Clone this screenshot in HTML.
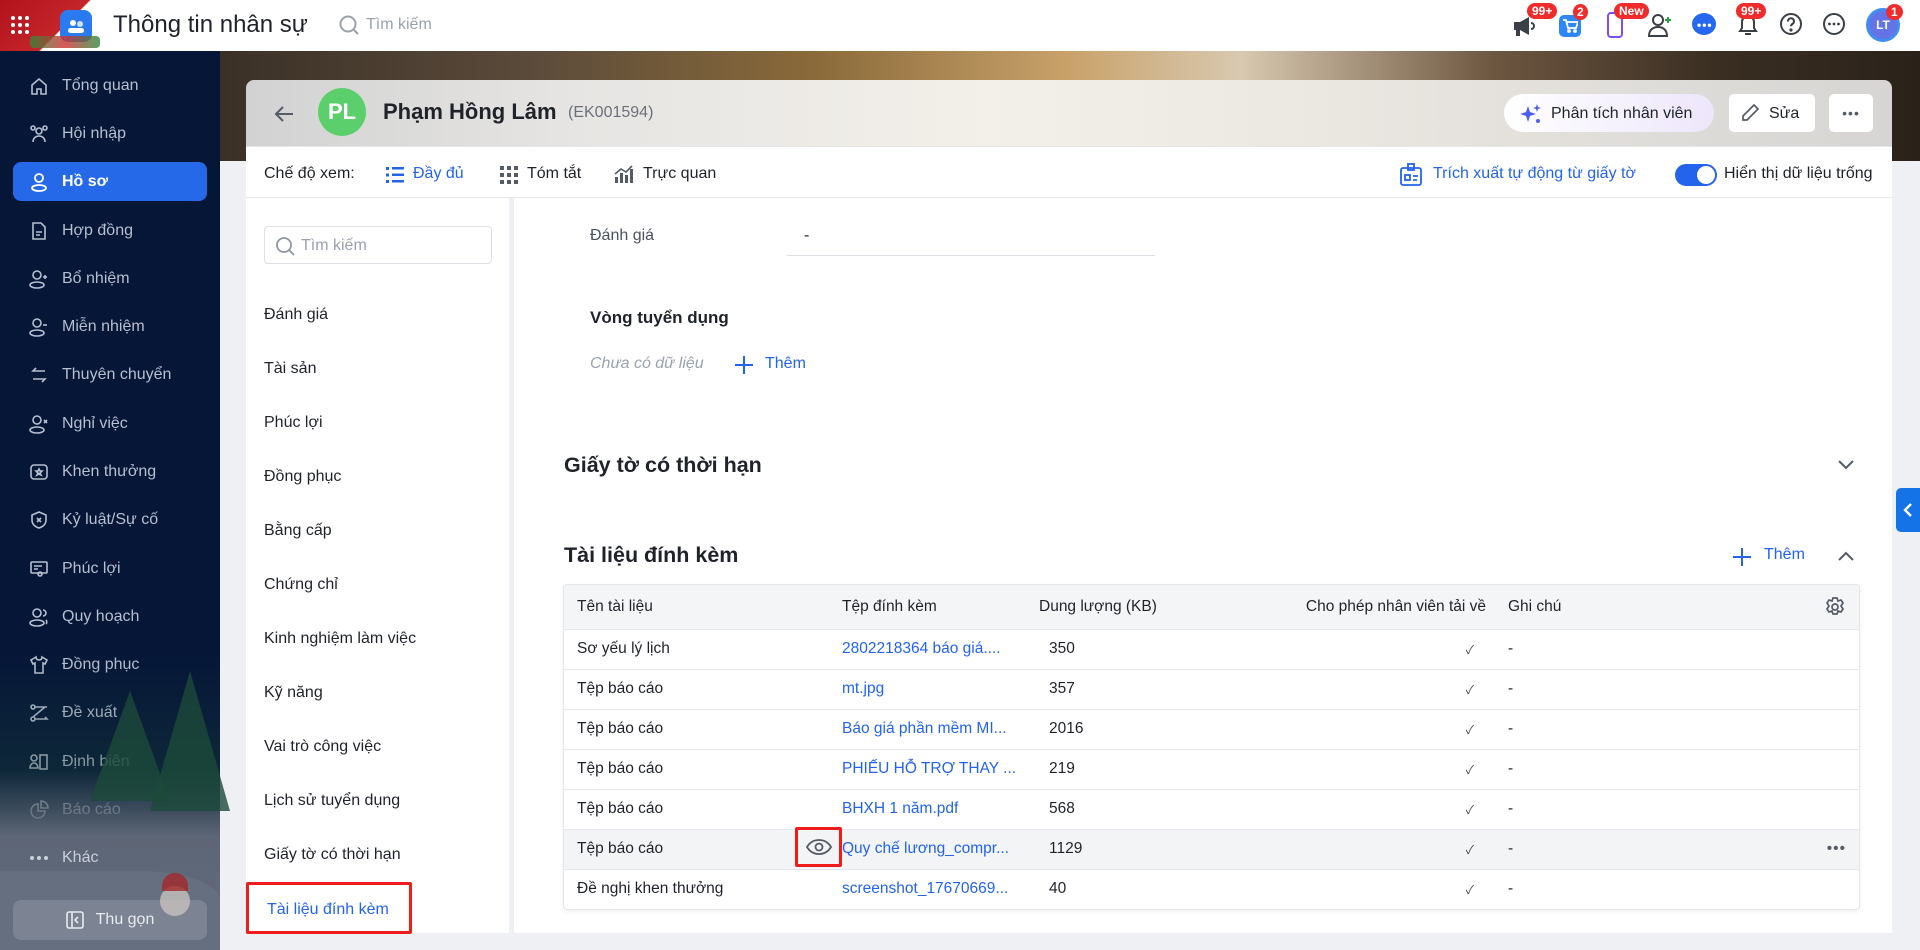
<!DOCTYPE html>
<html><head><meta charset="utf-8">
<style>
*{box-sizing:border-box;margin:0;padding:0}
body{width:1920px;height:950px;overflow:hidden;background:#eef0f3;font-family:"Liberation Sans","Noto Sans CJK SC",sans-serif;color:#1f2329;position:relative;font-size:15px}
.abs{position:absolute}
.top{left:0;top:0;width:1920px;height:51px;background:#fff}
.side{left:0;top:51px;width:220px;height:899px;background:#051637}
.si{position:absolute;left:13px;width:194px;height:39px;color:#b7bfd0;font-size:16px;display:flex;align-items:center;padding-left:49px;border-radius:8px}
.si svg{position:absolute;left:16px;top:10px}
.si.act{background:#2669e8;color:#fff;font-weight:bold}
.banner{left:220px;top:51px;width:1700px;height:110px;background:linear-gradient(90deg,#3a3026 0%,#5a4a3a 18%,#8a6a3a 35%,#c9a26a 50%,#d8c9b0 60%,#6d5640 75%,#3a2e22 88%,#2a221a 100%)}
.card{left:246px;top:80px;width:1646px;height:66px;border-radius:8px 8px 0 0;background:linear-gradient(90deg,#d2d2d2 0%,#e6e5e3 20%,#f3efe9 45%,#ebe7e1 65%,#d6d5d3 100%)}
.vbar{left:246px;top:146px;width:1646px;height:52px;background:#fff;border-top:1px solid #e5e7eb;border-bottom:1px solid #e5e7eb}
.lp{left:246px;top:198px;width:263px;height:735px;background:#fff}
.li{position:absolute;left:18px;font-size:16px;color:#1f2329;margin-top:2px}
.ct{left:514px;top:198px;width:1378px;height:735px;background:#fff}
.blue{color:#2463eb}
table{border-collapse:collapse;width:1296px;font-size:15.5px}
td,th{height:40px;text-align:left;font-weight:normal;border-bottom:1px solid #e5e7eb;white-space:nowrap}
th{height:44px;background:#f4f5f7;color:#1f2329}
.ck{text-align:right;padding-right:34px;font-size:12px;color:#444}
.badge{position:absolute;background:#ef2b2b;color:#fff;font-size:12px;font-weight:bold;border-radius:9px;padding:1px 5px;line-height:14px}
</style></head><body>

<div class="abs top">
  <div class="abs" style="left:0;top:0;width:112px;height:51px;background:linear-gradient(135deg,#b3141c 0%,#c3252b 55%,#fff 56%);border-bottom-right-radius:40px"></div>
  <svg class="abs" style="left:9px;top:14px" width="22" height="22"><g fill="#fff"><circle cx="4" cy="4" r="2"/><circle cx="11" cy="4" r="2"/><circle cx="18" cy="4" r="2"/><circle cx="4" cy="11" r="2"/><circle cx="11" cy="11" r="2"/><circle cx="18" cy="11" r="2"/><circle cx="4" cy="18" r="2"/><circle cx="11" cy="18" r="2"/><circle cx="18" cy="18" r="2"/></g></svg>
  <div class="abs" style="left:60px;top:10px;width:32px;height:32px;border-radius:8px;background:#2b7bf0"></div>
  <svg class="abs" style="left:66px;top:16px" width="20" height="20"><circle cx="7" cy="7" r="3" fill="#fff"/><circle cx="14" cy="8" r="3" fill="#cfe2ff"/><rect x="2" y="12" width="16" height="5" rx="2.5" fill="#fff"/></svg>
  <div class="abs" style="left:30px;top:36px;width:70px;height:12px;background:linear-gradient(90deg,#2f8a3c,#d03030,#2f8a3c);border-radius:4px;opacity:.8"></div>
  <div class="abs" style="left:113px;top:11px;font-size:24px;color:#1f2329">Thông tin nhân sự</div>
  <svg class="abs" style="left:338px;top:14px" width="22" height="22" fill="none" stroke="#9aa1ad" stroke-width="2"><circle cx="10" cy="10" r="7.5"/><path d="M15.5 15.5l4.5 4.5"/></svg>
  <div class="abs" style="left:366px;top:16px;font-size:16px;color:#9aa1ad">Tìm kiếm</div>

  <svg class="abs" style="left:1511px;top:14px" width="26" height="24" fill="#3b3f46"><path d="M3 8h6l9-5v18l-9-5H3z"/><rect x="5" y="16" width="4" height="6"/><path d="M20 9a3 3 0 010 6" stroke="#3b3f46" fill="none" stroke-width="2"/></svg>
  <div class="badge" style="left:1527px;top:3px">99+</div>
  <div class="abs" style="left:1559px;top:15px;width:22px;height:22px;border-radius:5px;background:#2f86f6"></div>
  <svg class="abs" style="left:1562px;top:18px" width="16" height="16" fill="none" stroke="#fff" stroke-width="1.8"><path d="M1 2h3l2 8h8l2-6H5"/><circle cx="7" cy="13" r="1"/><circle cx="13" cy="13" r="1"/></svg>
  <div class="badge" style="left:1573px;top:4px;border-radius:50%;padding:1px 4px">2</div>
  <div class="abs" style="left:1607px;top:12px;width:16px;height:26px;border-radius:4px;border:2.5px solid #7c4df0"></div>
  <div class="badge" style="left:1614px;top:3px">New</div>
  <svg class="abs" style="left:1647px;top:12px" width="28" height="26" fill="none" stroke="#3b3f46" stroke-width="2"><circle cx="11" cy="8" r="5"/><path d="M2 24c0-6 4-9 9-9s9 3 9 9z"/><path d="M21 5v6M18 8h6" stroke="#2ea043"/></svg>
  <div class="abs" style="left:1692px;top:13px;width:24px;height:22px;border-radius:50%;background:#2667f0"></div>
  <div class="abs" style="left:1697px;top:18px;color:#fff;font-size:12px;letter-spacing:1px;font-weight:bold">•••</div>
  <svg class="abs" style="left:1736px;top:12px" width="24" height="26" fill="none" stroke="#3b3f46" stroke-width="2"><path d="M4 19h16l-2-3v-6a6 6 0 00-12 0v6z"/><path d="M9 22h6"/></svg>
  <div class="badge" style="left:1736px;top:3px">99+</div>
  <svg class="abs" style="left:1779px;top:12px" width="24" height="24" fill="none" stroke="#3b3f46" stroke-width="2"><circle cx="12" cy="12" r="10"/><path d="M9 9.5a3 3 0 115 2c-1 .7-2 1.3-2 2.8"/><circle cx="12" cy="18" r=".6" fill="#3b3f46"/></svg>
  <svg class="abs" style="left:1822px;top:12px" width="24" height="24" fill="none" stroke="#3b3f46" stroke-width="2"><circle cx="12" cy="12" r="10"/><g fill="#3b3f46" stroke="none"><circle cx="7.5" cy="12" r="1.4"/><circle cx="12" cy="12" r="1.4"/><circle cx="16.5" cy="12" r="1.4"/></g></svg>
  <div class="abs" style="left:1866px;top:8px;width:34px;height:34px;border-radius:50%;background:#6473e6;border:3px solid #3d8ff0;color:#fff;font-size:12px;font-weight:bold;text-align:center;line-height:28px">LT</div>
  <div class="badge" style="left:1886px;top:4px;border-radius:50%;padding:1px 5px">1</div>
</div>

<div class="abs side">
  <div class="si" style="top:15px"><svg width="20" height="20" fill="none" stroke="#b7bfd0" stroke-width="1.6"><path d="M3 9l7-6 7 6v9h-5v-5H8v5H3z"/></svg>Tổng quan</div>
  <div class="si" style="top:63px"><svg width="20" height="20" fill="none" stroke="#b7bfd0" stroke-width="1.6"><circle cx="10" cy="7" r="3"/><circle cx="4" cy="4" r="2"/><circle cx="16" cy="4" r="2"/><path d="M4 18c0-4 3-6 6-6s6 2 6 6"/></svg>Hội nhập</div>
  <div class="si act" style="top:111px"><svg width="20" height="20" fill="none" stroke="#fff" stroke-width="1.8"><circle cx="10" cy="6" r="4"/><ellipse cx="10" cy="16" rx="7" ry="3"/></svg>Hồ sơ</div>
  <div class="si" style="top:160px"><svg width="20" height="20" fill="none" stroke="#b7bfd0" stroke-width="1.6"><path d="M4 2h8l4 4v12H4z"/><path d="M7 11h6M7 14h4"/></svg>Hợp đồng</div>
  <div class="si" style="top:208px"><svg width="20" height="20" fill="none" stroke="#b7bfd0" stroke-width="1.6"><circle cx="8" cy="6" r="4"/><ellipse cx="8" cy="16" rx="7" ry="3"/><path d="M16 6v4M14 8h4"/></svg>Bổ nhiệm</div>
  <div class="si" style="top:256px"><svg width="20" height="20" fill="none" stroke="#b7bfd0" stroke-width="1.6"><circle cx="8" cy="6" r="4"/><ellipse cx="8" cy="16" rx="7" ry="3"/><path d="M14 8h4"/></svg>Miễn nhiệm</div>
  <div class="si" style="top:304px"><svg width="20" height="20" fill="none" stroke="#b7bfd0" stroke-width="1.6"><path d="M16 6H4l3-3M4 14h12l-3 3"/></svg>Thuyên chuyển</div>
  <div class="si" style="top:353px"><svg width="20" height="20" fill="none" stroke="#b7bfd0" stroke-width="1.6"><circle cx="8" cy="6" r="4"/><ellipse cx="8" cy="16" rx="7" ry="3"/><path d="M15 6l3 3M18 6l-3 3"/></svg>Nghỉ việc</div>
  <div class="si" style="top:401px"><svg width="20" height="20" fill="none" stroke="#b7bfd0" stroke-width="1.6"><rect x="2" y="3" width="16" height="14" rx="3"/><path d="M10 7l1 2h2l-2 2 1 2-2-1-2 1 1-2-2-2h2z"/></svg>Khen thưởng</div>
  <div class="si" style="top:449px"><svg width="20" height="20" fill="none" stroke="#b7bfd0" stroke-width="1.6"><path d="M10 2l7 3v5c0 4-3 7-7 8-4-1-7-4-7-8V5z"/><path d="M8 8l4 4M12 8l-4 4"/></svg>Kỷ luật/Sự cố</div>
  <div class="si" style="top:498px"><svg width="20" height="20" fill="none" stroke="#b7bfd0" stroke-width="1.6"><rect x="2" y="3" width="16" height="11" rx="1"/><circle cx="11" cy="15" r="2"/><path d="M5 7h8M5 10h4"/></svg>Phúc lợi</div>
  <div class="si" style="top:546px"><svg width="20" height="20" fill="none" stroke="#b7bfd0" stroke-width="1.6"><circle cx="8" cy="6" r="4"/><ellipse cx="8" cy="16" rx="7" ry="3"/><path d="M14 3a3 3 0 010 6M17 13c1 1 1 3 0 4"/></svg>Quy hoạch</div>
  <div class="si" style="top:594px"><svg width="20" height="20" fill="none" stroke="#b7bfd0" stroke-width="1.6"><path d="M7 2L2 5l2 4 2-1v10h8V8l2 1 2-4-5-3c0 2-1 3-3 3S7 4 7 2z"/></svg>Đồng phục</div>
  <div class="si" style="top:642px"><svg width="20" height="20" fill="none" stroke="#b7bfd0" stroke-width="1.6"><circle cx="4" cy="4" r="2"/><circle cx="4" cy="16" r="2"/><path d="M6 4h12M16 4L4 14M6 16h12l-2-2"/></svg>Đề xuất</div>
  <div class="si" style="top:691px"><svg width="20" height="20" fill="none" stroke="#b7bfd0" stroke-width="1.6"><circle cx="5" cy="6" r="3"/><path d="M1 16c0-3 2-5 4-5s4 2 4 5z"/><rect x="11" y="3" width="7" height="14"/></svg>Định biên</div>
  <div class="si" style="top:739px"><svg width="20" height="20" fill="none" stroke="#b7bfd0" stroke-width="1.6"><path d="M9 4a7 7 0 107 7H9z"/><path d="M12 1a7 7 0 017 7h-7z"/></svg>Báo cáo</div>
  <div class="abs" style="left:0;top:600px;width:220px;height:299px;background:linear-gradient(180deg,rgba(5,22,55,0) 0%,rgba(30,70,60,.35) 40%,#5d6676 62%,#636b7c 100%)"></div>
  <div class="abs" style="left:90px;top:640px;width:0;height:0;border-left:40px solid transparent;border-right:40px solid transparent;border-bottom:110px solid #1d4a3a;opacity:.8"></div>
  <div class="abs" style="left:150px;top:620px;width:0;height:0;border-left:40px solid transparent;border-right:40px solid transparent;border-bottom:140px solid #1d4a3a;opacity:.8"></div>
  <div class="abs" style="left:0;top:820px;width:220px;height:79px;background:#666f80;border-top-right-radius:80px 30px"></div>
  <div class="si" style="top:787px;color:#c9cfdb"><svg width="20" height="20" fill="#c9cfdb"><circle cx="3" cy="10" r="2"/><circle cx="10" cy="10" r="2"/><circle cx="17" cy="10" r="2"/></svg>Khác</div>
  <div class="abs" style="left:13px;top:849px;width:194px;height:40px;border-radius:8px;background:#7c8494;color:#e8ebf0;font-size:16px;text-align:center;line-height:40px;padding-left:30px">Thu gọn</div>
  <svg class="abs" style="left:66px;top:859px" width="18" height="20" fill="none" stroke="#e8ebf0" stroke-width="1.6"><rect x="1" y="2" width="16" height="16" rx="2"/><path d="M6 2v16M12 7l-3 3 3 3"/></svg>
  <div class="abs" style="left:160px;top:835px;width:30px;height:30px;border-radius:50%;background:#c8c2be;opacity:.8"></div>
  <div class="abs" style="left:162px;top:822px;width:26px;height:18px;border-radius:13px 13px 0 0;background:#a42828;opacity:.8"></div>
</div>

<div class="abs banner"></div>
<div class="abs card">
  <svg class="abs" style="left:27px;top:24px" width="22" height="20" fill="none" stroke="#555b66" stroke-width="2"><path d="M20 10H3M10 3l-7 7 7 7"/></svg>
  <div class="abs" style="left:72px;top:8px;width:48px;height:48px;border-radius:50%;background:#5bcf6c;color:#fff;font-size:22px;font-weight:bold;text-align:center;line-height:48px">PL</div>
  <div class="abs" style="left:137px;top:19px;font-size:22px;font-weight:bold;color:#1f2329">Phạm Hồng Lâm</div>
  <div class="abs" style="left:322px;top:24px;font-size:16px;color:#6b7079">(EK001594)</div>
  <div class="abs" style="left:1258px;top:14px;width:210px;height:38px;border-radius:19px;background:linear-gradient(90deg,#fff,#ede6fb);font-size:16px;color:#1f2329;line-height:40px;padding-left:47px">Phân tích nhân viên</div>
  <svg class="abs" style="left:1274px;top:23px" width="22" height="22" fill="#4f5fe8"><path d="M8 3l2 6 6 2-6 2-2 6-2-6-6-2 6-2z"/><path d="M17 1l1 3 3 1-3 1-1 3-1-3-3-1 3-1z"/><circle cx="18" cy="18" r="2"/></svg>
  <div class="abs" style="left:1483px;top:14px;width:86px;height:38px;border-radius:5px;background:#fff;font-size:16px;line-height:40px;padding-left:40px">Sửa</div>
  <svg class="abs" style="left:1494px;top:23px" width="20" height="20" fill="none" stroke="#555b66" stroke-width="1.7"><path d="M14 2l4 4L7 17H3v-4z"/></svg>
  <div class="abs" style="left:1583px;top:14px;width:44px;height:38px;border-radius:5px;background:#fff;font-size:14px;text-align:center;line-height:38px;color:#555b66;letter-spacing:1px">•••</div>
</div>

<div class="abs vbar">
  <div class="abs" style="left:18px;top:18px;font-size:16px">Chế độ xem:</div>
  <svg class="abs" style="left:140px;top:19px" width="18" height="18" fill="#2463eb"><rect x="0" y="1" width="3" height="3"/><rect x="6" y="1" width="12" height="2.5"/><rect x="0" y="7.5" width="3" height="3"/><rect x="6" y="7.5" width="12" height="2.5"/><rect x="0" y="14" width="3" height="3"/><rect x="6" y="14" width="12" height="2.5"/></svg>
  <div class="abs blue" style="left:167px;top:18px;font-size:16px">Đầy đủ</div>
  <svg class="abs" style="left:254px;top:19px" width="18" height="18" fill="#555b66"><g><rect x="0" y="0" width="4" height="4"/><rect x="7" y="0" width="4" height="4"/><rect x="14" y="0" width="4" height="4"/><rect x="0" y="7" width="4" height="4"/><rect x="7" y="7" width="4" height="4"/><rect x="14" y="7" width="4" height="4"/><rect x="0" y="14" width="4" height="4"/><rect x="7" y="14" width="4" height="4"/><rect x="14" y="14" width="4" height="4"/></g></svg>
  <div class="abs" style="left:281px;top:18px;font-size:16px">Tóm tắt</div>
  <svg class="abs" style="left:368px;top:17px" width="20" height="20" fill="#555b66"><rect x="1" y="13" width="3" height="6"/><rect x="6" y="9" width="3" height="10"/><rect x="11" y="11" width="3" height="8"/><rect x="16" y="5" width="3" height="14"/><path d="M1 10l6-5 5 3 6-6" stroke="#555b66" stroke-width="1.6" fill="none"/></svg>
  <div class="abs" style="left:397px;top:18px;font-size:16px">Trực quan</div>
  <svg class="abs" style="left:1154px;top:16px" width="22" height="24" fill="none" stroke="#2463eb" stroke-width="1.8"><rect x="1" y="5" width="20" height="17" rx="2"/><rect x="8" y="1" width="6" height="6"/><rect x="5" y="12" width="5" height="5"/><path d="M13 13h5M13 17h4"/></svg>
  <div class="abs blue" style="left:1187px;top:18px;font-size:16px">Trích xuất tự động từ giấy tờ</div>
  <div class="abs" style="left:1429px;top:17px;width:42px;height:22px;border-radius:11px;background:#2463eb"></div>
  <div class="abs" style="left:1451px;top:19px;width:18px;height:18px;border-radius:50%;background:#fff"></div>
  <div class="abs" style="left:1478px;top:18px;font-size:16px">Hiển thị dữ liệu trống</div>
</div>

<div class="abs lp">
  <div class="abs" style="left:18px;top:28px;width:228px;height:38px;border:1px solid #dcdfe4;border-radius:4px"></div>
  <svg class="abs" style="left:29px;top:38px" width="20" height="20" fill="none" stroke="#8f96a3" stroke-width="1.8"><circle cx="9" cy="9" r="7"/><path d="M14 14l5 5"/></svg>
  <div class="abs" style="left:55px;top:39px;font-size:16px;color:#9aa1ad">Tìm kiếm</div>
  <div class="li" style="top:106px">Đánh giá</div>
  <div class="li" style="top:160px">Tài sản</div>
  <div class="li" style="top:214px">Phúc lợi</div>
  <div class="li" style="top:268px">Đồng phục</div>
  <div class="li" style="top:322px">Bằng cấp</div>
  <div class="li" style="top:376px">Chứng chỉ</div>
  <div class="li" style="top:430px">Kinh nghiệm làm việc</div>
  <div class="li" style="top:484px">Kỹ năng</div>
  <div class="li" style="top:538px">Vai trò công việc</div>
  <div class="li" style="top:592px">Lịch sử tuyển dụng</div>
  <div class="li" style="top:646px">Giấy tờ có thời hạn</div>
  <div class="abs" style="left:0;top:684px;width:166px;height:52px;border:3px solid #ee1c1c;border-radius:2px"></div>
  <div class="li blue" style="top:701px;left:21px">Tài liệu đính kèm</div>
</div>

<div class="abs ct">
  <div class="abs" style="left:76px;top:29px;font-size:16px;color:#4b5160">Đánh giá</div>
  <div class="abs" style="left:290px;top:29px;font-size:16px">-</div>
  <div class="abs" style="left:273px;top:57px;width:368px;height:1px;background:#dcdfe4"></div>
  <div class="abs" style="left:76px;top:110px;font-size:17px;font-weight:bold">Vòng tuyển dụng</div>
  <div class="abs" style="left:76px;top:157px;font-size:16px;color:#9aa1ad;font-style:italic">Chưa có dữ liệu</div>
  <svg class="abs" style="left:220px;top:157px" width="20" height="20" stroke="#2463eb" stroke-width="2"><path d="M10 1v18M1 10h18"/></svg>
  <div class="abs blue" style="left:251px;top:157px;font-size:16px">Thêm</div>
  <div class="abs" style="left:50px;top:255px;font-size:21.5px;font-weight:bold">Giấy tờ có thời hạn</div>
  <svg class="abs" style="left:1323px;top:261px" width="18" height="12" fill="none" stroke="#555b66" stroke-width="2"><path d="M2 2l7 7 7-7"/></svg>
  <div class="abs" style="left:50px;top:345px;font-size:21.5px;font-weight:bold">Tài liệu đính kèm</div>
  <svg class="abs" style="left:1218px;top:349px" width="20" height="20" stroke="#2463eb" stroke-width="2"><path d="M10 1v18M1 10h18"/></svg>
  <div class="abs blue" style="left:1250px;top:348px;font-size:16px">Thêm</div>
  <svg class="abs" style="left:1323px;top:352px" width="18" height="12" fill="none" stroke="#555b66" stroke-width="2"><path d="M2 10l7-7 7 7"/></svg>

  <div class="abs" style="left:49px;top:386px;width:1297px;border:1px solid #e2e5ea;border-radius:4px;overflow:hidden;box-shadow:0 2px 6px rgba(0,0,0,.05)">
  <table>
    <tr><th style="padding-left:13px;width:278px">Tên tài liệu</th><th style="width:197px">Tệp đính kèm</th><th style="width:231px">Dung lượng (KB)</th><th style="width:238px;text-align:right;padding-right:22px">Cho phép nhân viên tải về</th><th>Ghi chú</th><th style="text-align:right;padding-right:14px"><svg width="22" height="22" fill="none" stroke="#555b66" stroke-width="1.7" style="vertical-align:middle"><path d="M9 2h4l1 3 3-1 2 3-2 3 2 3-2 3-3-1-1 3H9l-1-3-3 1-2-3 2-3-2-3 2-3 3 1z"/><circle cx="11" cy="11" r="3"/></svg></th></tr>
    <tr><td style="padding-left:13px">Sơ yếu lý lịch</td><td class="blue">2802218364 báo giá....</td><td style="padding-left:10px">350</td><td class="ck">✓</td><td>-</td><td></td></tr>
    <tr><td style="padding-left:13px">Tệp báo cáo</td><td class="blue">mt.jpg</td><td style="padding-left:10px">357</td><td class="ck">✓</td><td>-</td><td></td></tr>
    <tr><td style="padding-left:13px">Tệp báo cáo</td><td class="blue">Báo giá phần mềm MI...</td><td style="padding-left:10px">2016</td><td class="ck">✓</td><td>-</td><td></td></tr>
    <tr><td style="padding-left:13px">Tệp báo cáo</td><td class="blue">PHIẾU HỖ TRỢ THAY ...</td><td style="padding-left:10px">219</td><td class="ck">✓</td><td>-</td><td></td></tr>
    <tr><td style="padding-left:13px">Tệp báo cáo</td><td class="blue">BHXH 1 năm.pdf</td><td style="padding-left:10px">568</td><td class="ck">✓</td><td>-</td><td></td></tr>
    <tr style="background:#f3f4f6"><td style="padding-left:13px">Tệp báo cáo</td><td class="blue">Quy chế lương_compr...</td><td style="padding-left:10px">1129</td><td class="ck">✓</td><td>-</td><td style="text-align:right;padding-right:14px;color:#555b66;letter-spacing:1px">•••</td></tr>
    <tr><td style="padding-left:13px;border:none">Đề nghị khen thưởng</td><td class="blue" style="border:none">screenshot_17670669...</td><td style="padding-left:10px;border:none">40</td><td class="ck" style="border:none">✓</td><td style="border:none">-</td><td style="border:none"></td></tr>
  </table>
  </div>
  <div class="abs" style="left:281px;top:629px;width:47px;height:40px;border:3px solid #ee1c1c;border-radius:2px"></div>
  <svg class="abs" style="left:292px;top:640px" width="26" height="18" fill="none" stroke="#555b66" stroke-width="1.8"><path d="M1 9c3-5 7-7 12-7s9 2 12 7c-3 5-7 7-12 7S4 14 1 9z"/><circle cx="13" cy="9" r="3.5"/></svg>
</div>

<div class="abs" style="left:1896px;top:488px;width:24px;height:44px;background:#1473e6;border-radius:5px 0 0 5px"></div>
<svg class="abs" style="left:1902px;top:502px" width="12" height="16" fill="none" stroke="#fff" stroke-width="2.4"><path d="M9 2L3 8l6 6"/></svg>
</body></html>
